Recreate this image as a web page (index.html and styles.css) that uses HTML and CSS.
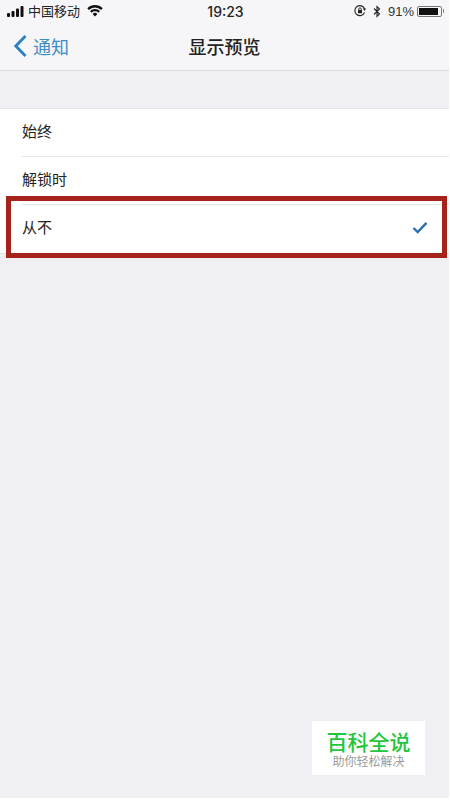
FILE: index.html
```html
<!DOCTYPE html>
<html lang="zh">
<head>
<meta charset="utf-8">
<title>显示预览</title>
<link rel="stylesheet" href="styles.css">
</head>
<body>
<div class="phone">
  <header class="top">
    <div class="status">
      <div class="status-left">
        <svg class="signal" width="17" height="11" viewBox="0 0 17 11"><rect x="0" y="7" width="3" height="4" rx="1"/><rect x="4.500" y="5" width="3" height="6" rx="1"/><rect x="9" y="2.500" width="3" height="8.500" rx="1"/><rect x="13.500" y="0" width="3" height="11" rx="1"/></svg>
        <span class="carrier">中国移动</span>
        <svg class="wifi" width="16" height="12" viewBox="0 0 16 12"><path d="M8 11.500 5.600 8.900a3.400 3.400 0 0 1 4.800 0z"/><path d="M4.500 7.700 3 6.100a7 7 0 0 1 10 0l-1.500 1.600a4.900 4.900 0 0 0-7 0z"/><path d="M1.900 5 .3 3.300a10.900 10.900 0 0 1 15.400 0L14.100 5a8.600 8.600 0 0 0-12.200 0z"/></svg>
      </div>
      <div class="time">19:23</div>
      <div class="status-right">
        <svg class="lock" width="12" height="12" viewBox="0 0 12 12"><path class="ring" d="M10.500 7.500A5 5 0 1 1 10.600 4"/><path d="M9 3.500h3L10.500 6z"/><rect x="4" y="5" width="4" height="3.200" rx=".5"/><path class="ring thin" d="M4.800 5V4a1.200 1.200 0 0 1 2.400 0v1"/></svg>
        <svg class="bt" width="8" height="13" viewBox="0 0 8 13"><path d="M1 3.500 6.500 9 4 11.500v-10L6.500 4 1 9.500"/></svg>
        <span class="pct">91%</span>
        <span class="battery"><span class="battery-fill"></span></span>
        <span class="battery-tip"></span>
      </div>
    </div>
    <nav class="nav">
      <div class="back">
        <svg class="chevron" width="15" height="24" viewBox="0 0 15 24"><path d="M12.500 2 2.800 12l9.700 10"/></svg>
        <span>通知</span>
      </div>
      <h1 class="title">显示预览</h1>
    </nav>
  </header>
  <main class="content">
    <ul class="list">
      <li class="row">始终</li>
      <li class="row">解锁时</li>
      <li class="row row-last">从不
        <svg class="check" width="16" height="13" viewBox="0 0 16 13"><path d="M1.500 7 5.700 11 14.500 1.800"/></svg>
      </li>
    </ul>
  </main>
  <div class="highlight"></div>
  <aside class="mark">
    <div class="mark-title">百科全说</div>
    <div class="mark-sub">助你轻松解决</div>
  </aside>
</div>
</body>
</html>
```
FILE: styles.css
```css
* { box-sizing: border-box; }
html, body { margin: 0; padding: 0; }
body {
  width: 450px;
  height: 800px;
  overflow: hidden;
  background: #fff;
  font-family: "Noto Sans CJK SC", "Liberation Sans", sans-serif;
  color: #1a1a1a;
}
.phone {
  position: relative;
  width: 449px;
  height: 798px;
  background: #efeff4;
  overflow: hidden;
}
.top {
  height: 71px;
  background: #f6f6f8;
  border-bottom: 1px solid #dcdcde;
}
.status {
  height: 22px;
  padding: 0 5px 0 7px;
  display: grid;
  grid-template-columns: 1fr auto 1fr;
  align-items: center;
}
.status-left, .status-right {
  display: flex;
  align-items: center;
}
.status-right { justify-content: flex-end; }
.signal { fill: #111; flex: none; }
.carrier { font-size: 13px; margin-left: 4px; color: #222; line-height: 16px; }
.wifi { fill: #111; margin-left: 7px; flex: none; }
.time {
  font-family: Inter, "Liberation Sans", sans-serif;
  font-size: 14px;
  font-weight: 500;
  color: #222;
}
.lock { fill: #222; flex: none; }
.ring { fill: none; stroke: #222; stroke-width: 1.100; }
.thin { stroke-width: .9; }
.bt { fill: none; stroke: #222; stroke-width: 1.100; margin-left: 7px; flex: none; }
.pct {
  font-family: "Liberation Sans", sans-serif;
  font-size: 13px;
  color: #333;
  margin-left: 7px;
}
.battery {
  width: 25px;
  height: 11px;
  margin-left: 3px;
  padding: 1px;
  border: 1px solid #777;
  border-radius: 2px;
  display: block;
}
.battery-fill {
  display: block;
  width: 91%;
  height: 100%;
  background: #111;
}
.battery-tip {
  width: 1px;
  height: 4px;
  margin-left: 1px;
  background: #888;
}
.nav {
  position: relative;
  height: 48px;
  display: flex;
  align-items: center;
  justify-content: center;
}
.back {
  position: absolute;
  left: 13px;
  top: 12px;
  display: flex;
  align-items: center;
  color: #3d8cc4;
  font-size: 18px;
  line-height: 24px;
}
.back span { margin-left: 5px; }
.chevron { fill: none; stroke: #2a7fc2; stroke-width: 2.800; flex: none; }
.title {
  margin: 0;
  font-size: 18px;
  font-weight: 500;
  line-height: 24px;
  color: #222;
}
.content { padding-top: 37px; }
.list {
  list-style: none;
  margin: 0;
  padding: 0 0 0 22px;
  background: #fff;
  border-top: 1px solid #e2e2e6;
  border-bottom: 1px solid #e2e2e6;
}
.row {
  position: relative;
  height: 48px;
  display: flex;
  align-items: center;
  font-size: 15px;
  color: #222;
  border-bottom: 1px solid #e4e4e6;
  padding-bottom: 5px;
}
.row-last { border-bottom: 0; }
.check {
  position: absolute;
  right: 21px;
  top: 16px;
  fill: none;
  stroke: #2c6fae;
  stroke-width: 2.400;
}
.highlight {
  position: absolute;
  left: 6px;
  top: 196px;
  width: 441px;
  height: 62px;
  border: 5px solid #a5231b;
}
.mark {
  position: absolute;
  left: 312px;
  top: 721px;
  width: 113px;
  height: 54px;
  background: #fff;
  text-align: center;
  padding-top: 10px;
  font-family: "Liberation Sans", "Noto Sans CJK SC", sans-serif;
}
.mark-title {
  font-size: 21px;
  font-weight: 500;
  line-height: 24px;
  color: #1fc63e;
}
.mark-sub {
  font-size: 12px;
  line-height: 14px;
  color: #9a9a9a;
}
```
